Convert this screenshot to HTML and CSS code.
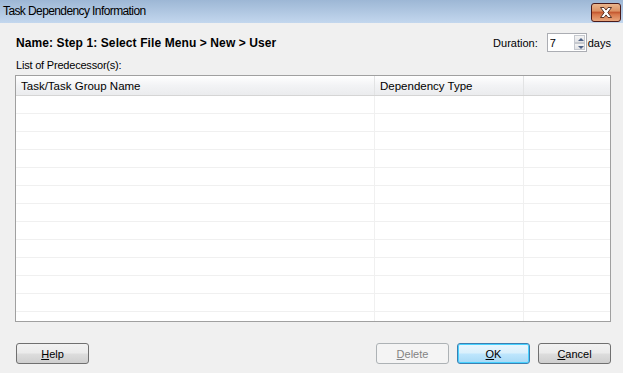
FILE: index.html
```html
<!DOCTYPE html>
<html lang="en">
<head>
  <meta charset="UTF-8">
  <title>Task Dependency Information</title>
  <link rel="stylesheet" href="styles.css">
</head>
<body>
  <div class="titlebar">
    <span class="title">Task Dependency Information</span>
    <button class="close" type="button" aria-label="Close">
      <svg width="28" height="17" viewBox="0 0 28 17">
        <path d="M8.5 3.5h3.5l2 2.6 2-2.6h3.5l-3.7 5 3.7 5h-3.5l-2-2.6-2 2.6h-3.5l3.7-5z" fill="#fff" stroke="#4a2418" stroke-width="0.9" stroke-linejoin="round"/>
      </svg>
    </button>
  </div>

  <div class="dialog">
    <div class="top-row">
      <div class="name">Name: Step 1: Select File Menu &gt; New &gt; User</div>
      <div class="duration">
        <label for="dur">Duration:</label>
        <div class="spin">
          <input id="dur" type="text" value="7">
          <div class="spin-btns">
            <span class="spin-up"></span>
            <span class="spin-down"></span>
          </div>
        </div>
        <span class="days">days</span>
      </div>
    </div>

    <div class="list-label">List of Predecessor(s):</div>

    <div class="grid">
      <div class="row head">
        <div class="cell c1">Task/Task Group Name</div>
        <div class="cell c2">Dependency Type</div>
        <div class="cell c3"></div>
      </div>
      <div class="row"><div class="cell c1"></div><div class="cell c2"></div><div class="cell c3"></div></div>
      <div class="row"><div class="cell c1"></div><div class="cell c2"></div><div class="cell c3"></div></div>
      <div class="row"><div class="cell c1"></div><div class="cell c2"></div><div class="cell c3"></div></div>
      <div class="row"><div class="cell c1"></div><div class="cell c2"></div><div class="cell c3"></div></div>
      <div class="row"><div class="cell c1"></div><div class="cell c2"></div><div class="cell c3"></div></div>
      <div class="row"><div class="cell c1"></div><div class="cell c2"></div><div class="cell c3"></div></div>
      <div class="row"><div class="cell c1"></div><div class="cell c2"></div><div class="cell c3"></div></div>
      <div class="row"><div class="cell c1"></div><div class="cell c2"></div><div class="cell c3"></div></div>
      <div class="row"><div class="cell c1"></div><div class="cell c2"></div><div class="cell c3"></div></div>
      <div class="row"><div class="cell c1"></div><div class="cell c2"></div><div class="cell c3"></div></div>
      <div class="row"><div class="cell c1"></div><div class="cell c2"></div><div class="cell c3"></div></div>
      <div class="row"><div class="cell c1"></div><div class="cell c2"></div><div class="cell c3"></div></div>
      <div class="row"><div class="cell c1"></div><div class="cell c2"></div><div class="cell c3"></div></div>
    </div>

    <div class="buttons">
      <button type="button" class="btn"><u>H</u>elp</button>
      <div class="spacer"></div>
      <button type="button" class="btn" disabled><u>D</u>elete</button>
      <button type="button" class="btn default"><u>O</u>K</button>
      <button type="button" class="btn"><u>C</u>ancel</button>
    </div>
  </div>
</body>
</html>
```

FILE: styles.css
```css
body { margin: 0; background: #f0f0f0; font-family: "Liberation Sans", Arial, sans-serif; font-size: 11px; color: #000; overflow: hidden; }

.titlebar { height: 23px; display: flex; align-items: center; padding: 0 2px 0 3px; background: linear-gradient(#9db7d5, #c3d7ee); }
.title { flex: 1; font-size: 12px; letter-spacing: -0.6px; color: #000; margin-top: -1px; }
.close { width: 30px; height: 19px; padding: 0; margin-top: 1px; border: 1px solid #4a1a1a; border-radius: 3px; background: linear-gradient(#eab58c 0%, #dd9467 40%, #c55a32 50%, #d7784c 62%, #e9a67c 100%); display: flex; align-items: center; justify-content: center; }

.dialog { padding: 0 12px 0 15px; }

.top-row { display: flex; align-items: center; height: 19px; margin-top: 10px; }
.name { flex: 1; font-weight: bold; font-size: 12px; letter-spacing: 0.1px; padding-left: 1px; }
.duration { display: flex; align-items: center; }
.duration label { margin-right: 9px; }
.spin { display: flex; width: 40px; height: 19px; box-sizing: border-box; border: 1px solid #abadb3; background: #fff; }
.spin input { width: 24px; border: none; padding: 0 0 0 2px; font: inherit; outline: none; }
.spin-btns { display: flex; flex-direction: column; width: 13px; margin: 1px 1px 1px 0; }
.spin-btns span { flex: 1; position: relative; box-sizing: border-box; border: 1px solid #c6c9cf; background: linear-gradient(#f4f4f4, #e2e3e6); }
.spin-up::after, .spin-down::after { content: ""; position: absolute; left: 3px; top: 2px; border-left: 3px solid transparent; border-right: 3px solid transparent; }
.spin-up::after { border-bottom: 3px solid #4d6185; }
.spin-down::after { border-top: 3px solid #4d6185; top: 2px; }
.days { margin-left: 1px; }

.list-label { margin-top: 7px; padding-left: 1px; height: 16px; letter-spacing: -0.2px; }

.grid { width: 596px; height: 247px; box-sizing: border-box; border: 1px solid #a0a0a0; background: #fff; overflow: hidden; }
.row { display: flex; height: 17px; border-bottom: 1px solid #f0f0f0; }
.cell { box-sizing: border-box; border-right: 1px solid #f0f0f0; padding-left: 5px; line-height: 17px; white-space: nowrap; }
.c1 { width: 359px; }
.c2 { width: 149px; }
.c3 { flex: 1; border-right: none; }
.row.head { height: 19px; border-bottom: 1px solid #d5d5d5; background: linear-gradient(#ffffff, #f2f3f5 50%, #ebecee); }
.head .cell { line-height: 20px; font-size: 11.5px; border-right: 1px solid #e2e3e4; }
.head .c3 { border-right: none; }

.buttons { display: flex; margin-top: 21px; gap: 8px; padding-left: 1px; }
.spacer { flex: 1; }
.btn { width: 73px; height: 21px; box-sizing: border-box; padding: 0; border: 1px solid #707070; border-radius: 3px; font: inherit; color: #000; background: linear-gradient(#f2f2f2 0%, #ebebeb 48%, #dddddd 52%, #cfcfcf 100%); }
.btn:disabled { border-color: #adb2b5; background: #f4f4f4; color: #838383; }
.btn.default { border-color: #3c7fb1; box-shadow: inset 0 0 0 1px #48d1ff; background: linear-gradient(#eaf6fd 0%, #d9f0fc 48%, #bee6fd 52%, #a7d9f5 100%); }
```
